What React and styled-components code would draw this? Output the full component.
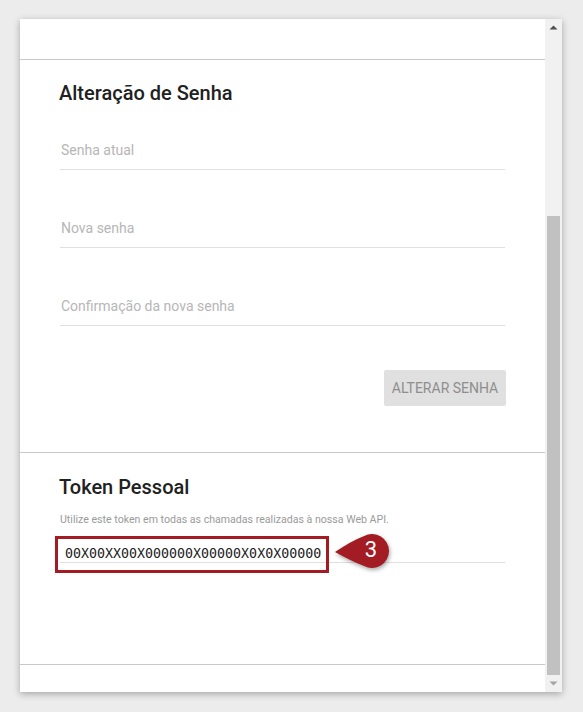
import React from "react";
import styled, { createGlobalStyle } from "styled-components";

const Global = createGlobalStyle`
  html, body { margin: 0; padding: 0; background: #ececec; }
  body { font-family: Roboto, "Noto Sans", sans-serif; }
`;

const Page = styled.div`
  padding: 19px 21px 20px 20px;
`;

const Panel = styled.div`
  display: flex;
  width: 542px;
  height: 673px;
  background: #fff;
  box-shadow: 0 2px 7px rgba(0, 0, 0, 0.3);
`;

const Content = styled.div`
  flex: 1;
  display: flex;
  flex-direction: column;
  overflow: hidden;
`;

const TopArea = styled.div`
  height: 40px;
  flex-shrink: 0;
  border-bottom: 1px solid #c8c8c8;
`;

const Section = styled.section`
  display: flex;
  flex-direction: column;
  padding: ${(p) => p.$pad};
  border-bottom: 1px solid #c8c8c8;
  flex-shrink: 0;
`;

const Heading = styled.h2`
  margin: 0 0 0 -1px;
  font-size: 20px;
  line-height: 24px;
  font-weight: 500;
  color: #212121;
`;

const Field = styled.div`
  margin-top: ${(p) => p.$mt}px;
  padding: 8px 0 10px 1px;
  font-size: 14px;
  line-height: 17px;
  color: #b6b6b6;
  border-bottom: 1px solid #e0e0e0;
`;

const Actions = styled.div`
  display: flex;
  justify-content: flex-end;
  margin: 44px -1px 0 0;
`;

const Button = styled.button`
  height: 36px;
  min-width: 122px;
  padding: 0 7px;
  border: none;
  border-radius: 2px;
  background: #e0e0e0;
  color: #8e8e8e;
  font-family: Roboto, sans-serif;
  font-size: 14px;
  font-weight: 400;
`;

const Hint = styled.p`
  margin: 14px 0 0;
  font-size: 10.6px;
  line-height: 13px;
  color: #9a9a9a;
`;

const TokenField = styled.div`
  position: relative;
  margin-top: 12px;
  padding: 8px 0 0 5px;
  font-family: "DejaVu Sans Mono", monospace;
  font-size: 13.3px;
  line-height: 16px;
  color: #222;
  border-bottom: 1px solid #e0e0e0;
`;

const Highlight = styled.div`
  position: absolute;
  left: -5px;
  top: -2px;
  width: 274px;
  height: 37px;
  box-sizing: border-box;
  border: 3px solid #a31b23;
`;

const Callout = styled.div`
  position: absolute;
  left: 270px;
  top: -10px;
  width: 66px;
  height: 46px;
  svg {
    display: block;
    filter: drop-shadow(1px 2px 2px rgba(0, 0, 0, 0.35));
  }
`;

const CalloutNum = styled.span`
  position: absolute;
  left: 28px;
  top: 10px;
  width: 26px;
  text-align: center;
  font-family: Roboto, sans-serif;
  font-size: 22px;
  line-height: 24px;
  color: #fff;
`;

const Scrollbar = styled.div`
  width: 17px;
  display: flex;
  flex-direction: column;
  background: #f1f1f1;
`;

const ArrowBtn = styled.div`
  height: 17px;
  display: flex;
  align-items: center;
  justify-content: center;
  flex-shrink: 0;
`;

const Track = styled.div`
  flex: 1;
  display: flex;
  flex-direction: column;
  padding: 0 2px;
`;

const Thumb = styled.div`
  margin-top: ${(p) => p.$offset}px;
  flex: 1;
  background: #c1c1c1;
`;

const Arrow = ({ up, color }) => (
  <svg width="9" height="5" viewBox="0 0 9 5">
    <path d={up ? "M0.5 4.5 L4.5 0.5 L8.5 4.5 Z" : "M0.5 0.5 L8.5 0.5 L4.5 4.5 Z"} fill={color} />
  </svg>
);

export default function App() {
  return (
    <>
      <Global />
      <Page>
        <Panel>
          <Content>
            <TopArea />
            <Section $pad="21px 40px 46px 40px">
              <Heading>Alteração de Senha</Heading>
              <Field $mt={29}>Senha atual</Field>
              <Field $mt={42}>Nova senha</Field>
              <Field $mt={42}>Confirmação da nova senha</Field>
              <Actions>
                <Button>ALTERAR SENHA</Button>
              </Actions>
            </Section>
            <Section $pad="22px 40px 101px 40px">
              <Heading>Token Pessoal</Heading>
              <Hint>Utilize este token em todas as chamadas realizadas à nossa Web API.</Hint>
              <TokenField>
                00X00XX00X000000X00000X0X0X00000
                <Highlight />
                <Callout>
                  <svg width="66" height="46" viewBox="0 0 66 46">
                    <path
                      d="M5 24 Q 21 13 34.2 7.9 A17 17 0 1 1 34.2 38.1 Q 21 33 5 24 Z"
                      fill="#a31b23"
                    />
                  </svg>
                  <CalloutNum>3</CalloutNum>
                </Callout>
              </TokenField>
            </Section>
          </Content>
          <Scrollbar>
            <ArrowBtn>
              <Arrow up color="#505050" />
            </ArrowBtn>
            <Track>
              <Thumb $offset={180} />
            </Track>
            <ArrowBtn>
              <Arrow color="#a3a3a3" />
            </ArrowBtn>
          </Scrollbar>
        </Panel>
      </Page>
    </>
  );
}
